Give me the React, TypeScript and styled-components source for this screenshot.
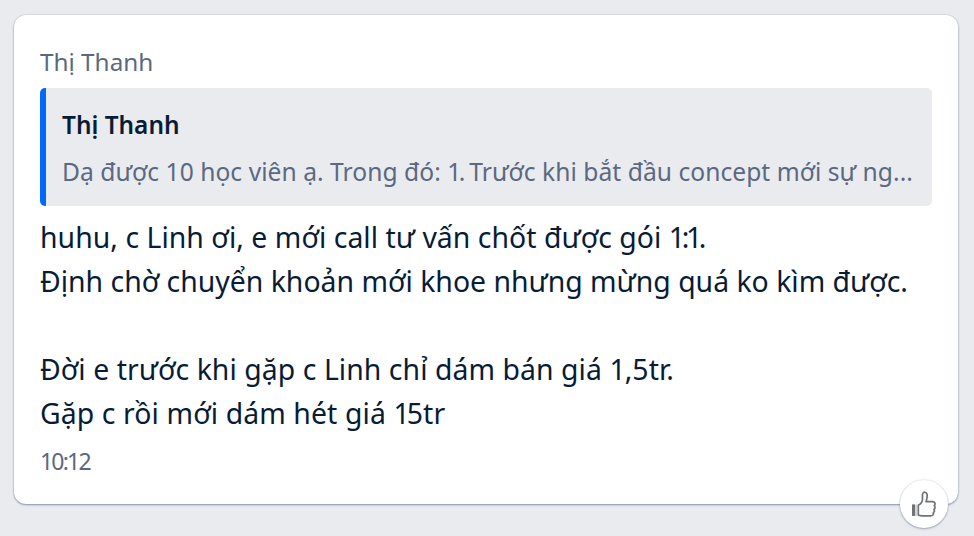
import React from "react";
import styled, { createGlobalStyle } from "styled-components";

const GlobalStyle = createGlobalStyle`
  * { box-sizing: border-box; }
  html, body { margin: 0; background: #eaebef; }
  body { font-family: "Noto Sans", "Open Sans", sans-serif; color: #081c36; }
`;

const Page = styled.main`
  height: 536px;
  padding: 15px 16px 32px 14px;
  overflow: hidden;
`;

const Bubble = styled.article`
  position: relative;
  height: 489px;
  padding: 30px 26px 0;
  background: #fff;
  border-radius: 12px;
  box-shadow: 0 0 2px rgba(8, 28, 54, 0.2), 0 1px 2px rgba(90, 110, 150, 0.65);
`;

const Line = styled.div<{ $track?: number }>`
  width: max-content;
  white-space: pre;
  letter-spacing: ${(p) => p.$track ?? 0}px;
`;

const Figures = styled.span<{ $track: number }>`
  letter-spacing: ${(p) => p.$track}px;
`;

const Sender = styled(Line)`
  height: 43px;
  font-size: 24.3px;
  line-height: 34px;
  color: #5a6981;
`;

const Quote = styled.blockquote`
  height: 118px;
  margin: 0;
  padding: 14px 16px 0;
  border-left: 6px solid #0068ff;
  border-radius: 5px;
  background: #eaebef;
`;

const QuoteAuthor = styled(Line)`
  font-size: 24.4px;
  font-weight: 600;
  line-height: 46px;
`;

const QuoteText = styled(Line)`
  font-size: 24.6px;
  line-height: 48px;
  color: #5a6981;
`;

const Message = styled.div`
  padding-top: 9px;
  font-size: 28.4px;
  line-height: 44px;
`;

const MessageLine = styled(Line)`
  height: 44px;
`;

const Time = styled(Line)`
  margin-top: 10px;
  font-size: 23px;
  line-height: 32px;
  color: #5a6981;
`;

const LikeButton = styled.button`
  position: absolute;
  right: 10px;
  bottom: -24px;
  display: grid;
  place-items: center;
  width: 48px;
  height: 48px;
  padding: 0;
  border: 0;
  border-radius: 50%;
  background: #fff;
  box-shadow: 0 0 2px rgba(8, 28, 54, 0.18), 0 1px 2px rgba(90, 110, 150, 0.5);
`;

type TextLine = { text: string; track: number; figures?: string; figuresTrack?: number; tail?: string };

const lines: TextLine[] = [
  { text: "huhu, c Linh ơi, e mới call tư vấn chốt được gói ", track: 0.04, figures: "1:1", figuresTrack: -3.4, tail: "." },
  { text: "Định chờ chuyển khoản mới khoe nhưng mừng quá ko kìm được.", track: 0 },
  { text: "", track: 0 },
  { text: "Đời e trước khi gặp c Linh chỉ dám bán giá ", track: 0.06, figures: "1", figuresTrack: -1, tail: ",5tr." },
  { text: "Gặp c rồi mới dám hét giá ", track: 0.1, figures: "1", figuresTrack: -3, tail: "5tr" },
];

const ThumbIcon = () => (
  <svg width="26" height="28" viewBox="0 0 26 28" fill="none" aria-hidden="true">
    <path d="M1 14.4h3v11.5H1z" fill="#707274" />
    <path d="M5 14.4v11.5" stroke="#b5b7b9" strokeWidth="1.2" />
    <path
      d="M7.3 15.2c2.6-1.2 4.1-3.4 4.2-6.2V4.8c0-3.7 4.7-3.4 4.7.8 0 2.2-.5 4.2-1.1 6.1h6.4c2.8 0 3.2 2.8 1.7 3.9 1.2 1.2 1.1 2.9-.3 3.8.9 1.3.7 2.5-.5 3.2.4 2.1-.8 3.2-2.9 3.2h-8.6c-1.5 0-2.4-.2-3.6-.8z"
      stroke="#707274"
      strokeWidth="1.7"
      strokeLinejoin="round"
    />
  </svg>
);

export default function App() {
  return (
    <>
      <GlobalStyle />
      <Page>
        <Bubble>
          <Sender>Thị Thanh</Sender>
          <Quote>
            <QuoteAuthor>Thị Thanh</QuoteAuthor>
            <QuoteText $track={0.04}>
              Dạ được 10 học viên ạ. Trong đó: <Figures $track={-2.5}>1.</Figures> Trước khi bắt đầu concept mới sự ng...
            </QuoteText>
          </Quote>
          <Message>
            {lines.map((line, i) => (
              <MessageLine key={i} $track={line.track}>
                {line.text}
                {line.figures && <Figures $track={line.figuresTrack ?? 0}>{line.figures}</Figures>}
                {line.tail}
              </MessageLine>
            ))}
          </Message>
          <Time $track={-1.8}>10:12</Time>
          <LikeButton aria-label="Like"><ThumbIcon /></LikeButton>
        </Bubble>
      </Page>
    </>
  );
}
